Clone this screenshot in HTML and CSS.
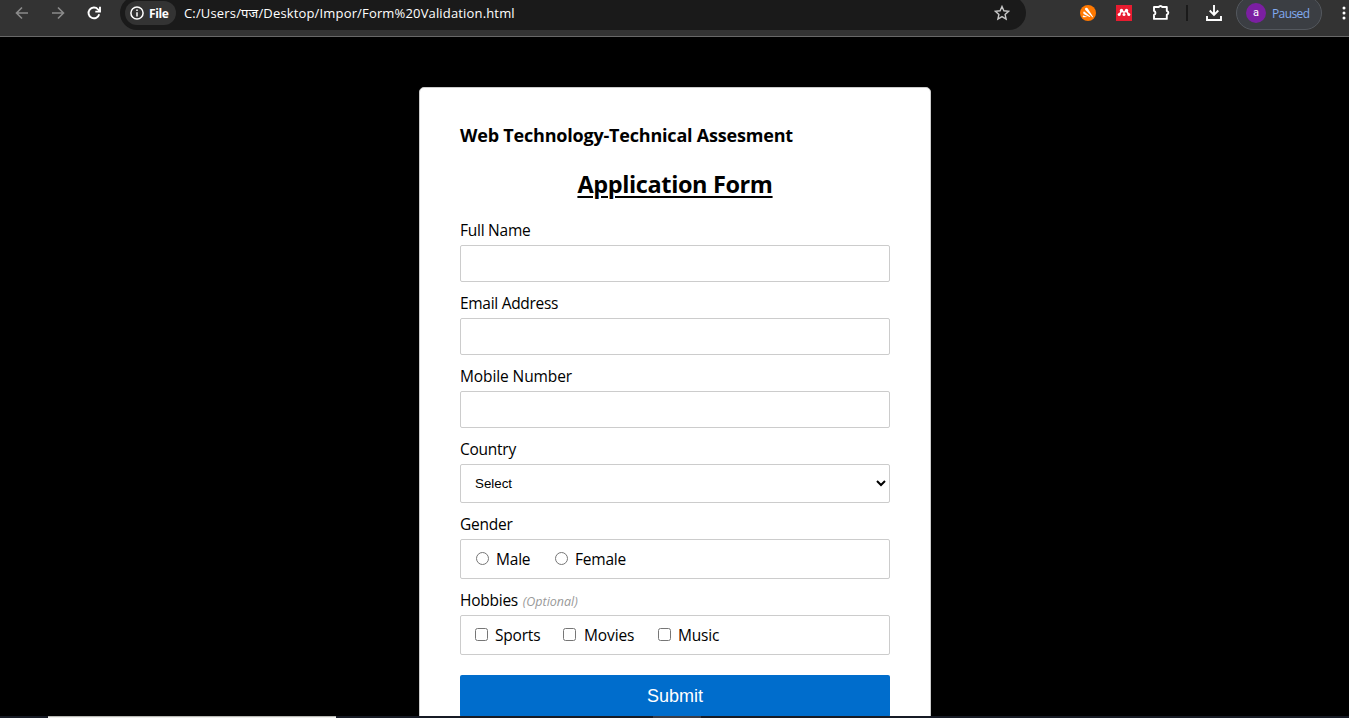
FILE: index.html
```html
<!DOCTYPE html>
<html lang="en">
<head>
<meta charset="utf-8">
<title>Form Validation</title>
<link rel="stylesheet" href="styles.css">
</head>
<body>
<header class="toolbar">
  <svg class="nav back" viewBox="0 0 14 14"><path d="M13 7H2M7 1.500L1.500 7L7 12.500"/></svg>
  <svg class="nav forward" viewBox="0 0 14 14"><path d="M1 7h11M7 1.500L12.500 7L7 12.500"/></svg>
  <svg class="nav reload" viewBox="0 0 14 14"><path d="M12.200 8.200A5.400 5.400 0 1 1 11 3.300L12.600 5"/><path d="M13 .8V5.600H8.300"/></svg>
  <div class="omnibox">
    <span class="chip"><svg class="info" viewBox="0 0 14 14"><circle cx="7" cy="7" r="6.100"/><path d="M7 6.200v4.200M7 3.500v1.500"/></svg><b class="chip-text">File</b></span>
    <span class="url">C:/Users/पज/Desktop/Impor/Form%20Validation.html</span>
    <svg class="star" viewBox="0 0 16 16"><path d="M8 1.500l1.900 4.300 4.700.5-3.500 3.100 1 4.600L8 11.600 3.900 14l1-4.600L1.400 6.300l4.700-.5z"/></svg>
  </div>
  <svg class="avast" viewBox="0 0 16 16"><circle cx="8" cy="8" r="8" fill="#ff7800"/><path d="M5.500 3.100c.9-.7 1.800-.4 2.300.4l5.200 8.200c.2.500-.2.800-.6.600L5.600 5.200c-.7-.5-.8-1.500-.1-2.100zM4.300 6.600l5.700 4.700c.4.500.1.800-.4.700L4 9.300c-1.300-.9-.8-3.200.3-2.700zM3.300 10.500l4.300 1.600-4.200.1c-1-.2-.9-1.700-.1-1.700z" fill="#fff"/></svg>
  <svg class="mendeley" viewBox="0 0 16 16"><path d="M0 0h16v16H0z" fill="#e81c30"/><g fill="#fff"><circle cx="5.500" cy="5.500" r="1.700"/><circle cx="10.500" cy="5.500" r="1.700"/><circle cx="3.200" cy="9.500" r="1.500"/><circle cx="8" cy="9.500" r="1.500"/><circle cx="12.800" cy="9.500" r="1.500"/></g><path d="M3.700 9L5.300 6 8 7.200 10.700 6l1.600 3" fill="none" stroke="#fff" stroke-width="1.600"/></svg>
  <svg class="puzzle" viewBox="0 0 18 18"><path d="M2 4h4.700a2 1.800 0 0 1 3.600 0h4.500v4a2 1.900 0 0 1 0 3.700v4.200H2v-4a2.100 2.100 0 0 0 0-4z"/></svg>
  <span class="divider"></span>
  <svg class="download" viewBox="0 0 16 16"><path d="M8 0v9.500M3.700 5.500L8 9.800l4.300-4.300M1 11v4h14v-4"/></svg>
  <div class="profile"><span class="avatar">a</span><span class="paused">Paused</span></div>
  <svg class="more" viewBox="0 0 4 14"><circle cx="2" cy="2" r="1.500"/><circle cx="2" cy="7" r="1.500"/><circle cx="2" cy="12" r="1.500"/></svg>
</header>
<main class="page">
  <form class="card">
    <h3 class="course">Web Technology-Technical Assesment</h3>
    <h2 class="title">Application Form</h2>
    <label class="label" for="name">Full Name</label>
    <input class="field" id="name" type="text">
    <label class="label label-email" for="email">Email Address</label>
    <input class="field" id="email" type="text">
    <label class="label label-mobile" for="mobile">Mobile Number</label>
    <input class="field" id="mobile" type="text">
    <label class="label" for="country">Country</label>
    <select class="field select" id="country"><option>Select</option></select>
    <div class="label">Gender</div>
    <div class="field options radios">
      <label class="option male"><input type="radio" name="gender">Male</label>
      <label class="option"><input type="radio" name="gender">Female</label>
    </div>
    <div class="label">Hobbies <i class="optional">(Optional)</i></div>
    <div class="field options checks">
      <label class="option sports"><input type="checkbox">Sports</label>
      <label class="option movies"><input type="checkbox">Movies</label>
      <label class="option"><input type="checkbox">Music</label>
    </div>
    <button class="submit" type="button">Submit</button>
  </form>
</main>
<footer class="taskbar"><span class="task"></span><span class="active"></span></footer>
</body>
</html>
```
FILE: styles.css
```css
* { box-sizing: border-box; }
body {
  margin: 0;
  height: 718px;
  overflow: hidden;
  display: flex;
  flex-direction: column;
  background: #000;
  color: #000;
  font-family: "Open Sans", "Noto Sans", sans-serif;
}
svg { display: block; flex: none; fill: none; }

.toolbar {
  flex: none;
  display: flex;
  align-items: flex-start;
  height: 37px;
  background: #333;
  border-bottom: 1px solid #686868;
  overflow: hidden;
}
.nav { width: 14px; height: 14px; margin-top: 6px; stroke: #8b8b8b; stroke-width: 1.6; }
.back { margin-left: 15px; }
.forward { margin-left: 22px; }
.reload { margin-left: 22px; stroke: #fff; stroke-width: 1.9; }
.omnibox {
  display: flex;
  align-items: center;
  flex: none;
  width: 906px;
  height: 34px;
  margin: -4px 0 0 19px;
  padding: 0 16px 0 5px;
  border-radius: 17px;
  background: #1a1a1a;
}
.chip {
  display: flex;
  align-items: center;
  width: 51px;
  height: 24px;
  padding-left: 5px;
  border-radius: 12px;
  background: #333;
  color: #fff;
  gap: 5px;
}
.info { width: 14px; height: 14px; stroke: #fff; stroke-width: 1.5; }
.chip-text { font-size: 12px; letter-spacing: -.4px; }
.url {
  flex: 1;
  margin-left: 8px;
  color: #fff;
  font-size: 13px;
  letter-spacing: .16px;
  white-space: nowrap;
}
.star { width: 16px; height: 16px; stroke: #c7c7c7; stroke-width: 1.4; }
.avast { width: 16px; height: 16px; margin: 5px 0 0 54px; }
.mendeley { width: 16px; height: 16px; margin: 5px 0 0 20px; }
.puzzle { width: 18px; height: 18px; margin: 3px 0 0 20px; stroke: #fff; stroke-width: 1.9; stroke-linejoin: round; }
.divider { flex: none; width: 2px; height: 16px; margin: 5px 0 0 16px; background: #1a1a1a; }
.download { width: 16px; height: 16px; margin: 5px 0 0 18px; stroke: #fff; stroke-width: 1.9; }
.profile {
  display: flex;
  align-items: center;
  flex: none;
  width: 86px;
  height: 34px;
  margin: -4px 0 0 14px;
  padding-left: 9px;
  border: 1px solid #54585e;
  border-radius: 17px;
  background: #3b3e43;
}
.avatar {
  width: 20px;
  height: 20px;
  border-radius: 50%;
  background: #7b1fa2;
  color: #fff;
  font: 11px/19px Roboto, sans-serif;
  text-align: center;
}
.paused { margin-left: 6px; color: #82aaf0; font-size: 12px; letter-spacing: -.6px; }
.more { width: 4px; height: 14px; margin: 6px 0 0 20px; fill: #fff; }

.page {
  flex: 1;
  min-height: 0;
  overflow: hidden;
  padding-top: 50px;
}
.card {
  display: flex;
  flex-direction: column;
  width: 512px;
  height: 700px;
  margin-left: 419px;
  padding: 32px 40px 0;
  border: 1px solid #ccc;
  border-radius: 5px;
  background: #fff;
}
.course { margin: 0; font-size: 18px; line-height: 30px; letter-spacing: -.2px; white-space: nowrap; }
.title {
  margin: 14px 0 0;
  font-size: 23.5px;
  line-height: 40px;
  height: 45px;
  text-align: center;
  letter-spacing: -.38px;
  text-decoration: underline;
  text-decoration-thickness: 2px;
  text-underline-offset: 3px;
  white-space: nowrap;
}
.label { flex: none; height: 36px; padding-top: 11px; font-size: 15.5px; line-height: 20px; letter-spacing: -.25px; white-space: nowrap; }
.label-email { letter-spacing: -.3px; }
.label-mobile { letter-spacing: -.1px; }
.optional { margin-left: 1px; color: #999; font-size: 12.5px; letter-spacing: 0; }
.field {
  flex: none;
  width: 430px;
  height: 37px;
  margin: 0;
  border: 1px solid #ccc;
  border-radius: 2px;
  background: #fff;
}
.select { height: 39px; padding: 0 11px 0 10px; color: #000; font: 13.333px "Liberation Sans", Arial, sans-serif; }
.options { display: flex; align-items: center; height: 40px; padding-left: 14px; }
.radios { padding-left: 15px; }
.option { display: flex; align-items: center; font-size: 15.5px; letter-spacing: -.2px; }
.option input { width: 13px; height: 13px; margin: 0 7px 2px 0; }
.male { width: 79px; }
.sports { width: 88px; }
.movies { width: 95px; letter-spacing: -.1px; }
.movies input { margin-right: 8px; }
.submit {
  flex: none;
  height: 42px;
  margin-top: 20px;
  padding: 0;
  border: 0;
  border-radius: 2px;
  background: #006dcc;
  color: #fff;
  font: 18px "Liberation Sans", Arial, sans-serif;
}

.taskbar { flex: none; display: flex; height: 2px; background: #171b25; }
.task { width: 288px; margin-left: 48px; background: #f0f0ee; border-top: 1px solid #b8b8b4; }
.active { width: 48px; margin-left: 317px; background: #3a3d47; }
```
